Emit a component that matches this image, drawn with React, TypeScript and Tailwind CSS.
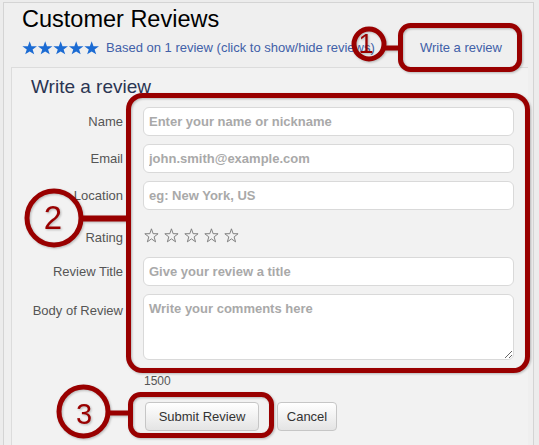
import React from "react";

const STAR = "12,0.5 14.82,8.62 23.41,8.79 16.57,13.99 19.05,22.21 12,17.3 4.95,22.21 7.43,13.99 0.59,8.79 9.18,8.62";

function BlueStars() {
  return (
    <svg width="78" height="14" viewBox="0 0 78 14" className="shrink-0">
      {[0, 1, 2, 3, 4].map((i) => (
        <g key={i} transform={`translate(${i * 15.5} 0) scale(0.64 0.6)`}>
          <polygon points={STAR} fill="#1b6bd3" />
        </g>
      ))}
    </svg>
  );
}

function OutlineStars() {
  return (
    <svg width="96" height="15" viewBox="0 0 96 15" className="shrink-0 -mt-[3px]">
      {[0, 1, 2, 3, 4].map((i) => (
        <g key={i} transform={`translate(${i * 20 + 0.5} 0.5) scale(0.58 0.6)`}>
          <polygon points={STAR} fill="none" stroke="#7a7a7a" strokeWidth="1.6" strokeLinejoin="round" />
        </g>
      ))}
    </svg>
  );
}

const inputCls =
  "w-[371px] h-[29px] rounded-[6px] border border-[#d9d9d9] bg-white px-[5px] text-[13px] text-[#333] outline-none placeholder:font-bold placeholder:text-[#a9a9a9]";

function Label({ children, extra = "" }: { children: React.ReactNode; extra?: string }) {
  return (
    <div className={`w-[92px] shrink-0 text-right text-[13px] leading-[18px] text-[#555] ${extra}`}>{children}</div>
  );
}

export default function App() {
  const red = "#990000";
  return (
    <div
      className="relative w-[539px] h-[445px] overflow-hidden bg-[#ececec] pl-[3px] pt-[2px]"
      style={{ fontFamily: '"Liberation Sans", Arial, sans-serif' }}
    >
      <div className="w-[531px] h-[450px] border-l border-t border-r border-[#d4d4d4] bg-[#efefef]">
        <div className="pl-[18px] pt-[2px] text-[23.5px] leading-[28px] text-black">Customer Reviews</div>
        <div className="mt-[6px] flex items-center pl-[18px] h-[18px]">
          <BlueStars />
          <span className="ml-[6px] text-[13px] leading-[18px] text-[#4160a8] whitespace-nowrap">
            Based on 1 review (click to show/hide reviews)
          </span>
          <span className="ml-auto mr-[31px] text-[13px] leading-[18px] text-[#4160a8] whitespace-nowrap">
            Write a review
          </span>
        </div>
        <div className="mt-[10px] ml-[7px] w-[517px] h-[400px] border-t border-l border-[#dcdcdc] bg-[#f2f2f2] pl-[19px] pt-[8px]">
          <div className="text-[19px] leading-[22px] text-[#2b3552]">Write a review</div>
          <div className="mt-[9px] flex flex-col">
            <div className="flex items-center gap-[20px]">
              <Label>Name</Label>
              <input className={inputCls} placeholder="Enter your name or nickname" />
            </div>
            <div className="mt-[8px] flex items-center gap-[20px]">
              <Label>Email</Label>
              <input className={inputCls} placeholder="john.smith@example.com" />
            </div>
            <div className="mt-[8px] flex items-center gap-[20px]">
              <Label>Location</Label>
              <input className={inputCls} placeholder="eg: New York, US" />
            </div>
            <div className="mt-[13px] h-[28px] flex items-center gap-[20px]">
              <Label extra="pt-[2px]">Rating</Label>
              <div className="pl-[1px] flex items-center">
                <OutlineStars />
              </div>
            </div>
            <div className="mt-[6px] flex items-center gap-[20px]">
              <Label>Review Title</Label>
              <input className={inputCls} placeholder="Give your review a title" />
            </div>
            <div className="mt-[8px] flex items-start gap-[20px]">
              <Label extra="pt-[8px]">Body of Review</Label>
              <textarea
                className="w-[371px] h-[66px] rounded-[6px] border border-[#d9d9d9] bg-white px-[5px] py-[5px] text-[13px] leading-[18px] text-[#333] outline-none placeholder:font-bold placeholder:text-[#a9a9a9]"
                placeholder="Write your comments here"
              />
            </div>
            <div className="mt-[13px] pl-[113px] text-[12px] leading-[16px] text-[#555]">1500</div>
            <div className="mt-[13px] pl-[114px] flex items-center gap-[18px]">
              <button className="w-[114px] h-[29px] rounded-[4px] border border-[#c6c6c6] bg-gradient-to-b from-white to-[#e4e4e4] text-[13px] text-[#333]">
                Submit Review
              </button>
              <button className="w-[60px] h-[29px] rounded-[4px] border border-[#c6c6c6] bg-gradient-to-b from-white to-[#e4e4e4] text-[13px] text-[#333]">
                Cancel
              </button>
            </div>
          </div>
        </div>
      </div>

      <svg
        className="absolute left-0 top-0 pointer-events-none"
        width="539"
        height="445"
        viewBox="0 0 539 445"
        style={{ filter: "drop-shadow(1px 1px 1px rgba(0,0,0,0.25))" }}
      >
        {/* annotation 1 */}
        <rect x="400.5" y="25.5" width="119" height="44" rx="10" fill="none" stroke={red} strokeWidth="5" />
        <line x1="383" y1="48" x2="400" y2="48" stroke={red} strokeWidth="5" />
        <circle cx="369" cy="44" r="15" fill="none" stroke={red} strokeWidth="5" />
        <text x="366" y="53" textAnchor="middle" fontSize="27" fill={red} fontFamily='"Liberation Sans", Arial, sans-serif'>1</text>

        {/* annotation 2 */}
        <rect x="128.5" y="95.5" width="399" height="275" rx="14" fill="none" stroke={red} strokeWidth="5" />
        <line x1="80" y1="218.5" x2="128" y2="218.5" stroke={red} strokeWidth="6" />
        <circle cx="54" cy="218" r="27" fill="none" stroke={red} strokeWidth="5" />
        <text x="53" y="229" textAnchor="middle" fontSize="33" fill={red} fontFamily='"Liberation Sans", Arial, sans-serif'>2</text>

        {/* annotation 3 */}
        <rect x="130.5" y="394.5" width="141" height="41" rx="10" fill="none" stroke={red} strokeWidth="5" />
        <line x1="107" y1="413" x2="130" y2="413" stroke={red} strokeWidth="5" />
        <circle cx="83.5" cy="411.5" r="24.5" fill="none" stroke={red} strokeWidth="5" />
        <text x="84" y="424" textAnchor="middle" fontSize="29" fill={red} fontFamily='"Liberation Sans", Arial, sans-serif'>3</text>
      </svg>
    </div>
  );
}
